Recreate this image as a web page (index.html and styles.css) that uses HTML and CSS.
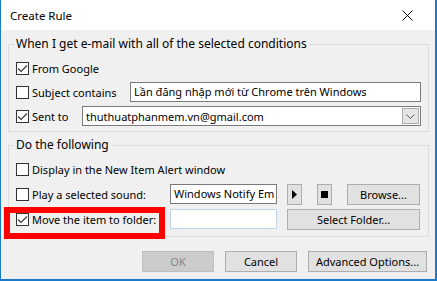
FILE: index.html
```html
<!DOCTYPE html>
<html lang="en">
<head>
    <meta charset="UTF-8">
    <meta name="viewport" content="width=device-width, initial-scale=1.0">
    <title>Create Rule</title>
    <link rel="stylesheet" href="styles.css">
</head>
<body>
    <div class="window">
        <div class="titlebar">
            <span class="title">Create Rule</span>
            <svg class="close" width="11" height="11" viewBox="0 0 11 11">
                <path d="M0.5 0.5 L10.5 10.5 M10.5 0.5 L0.5 10.5" stroke="#000" stroke-width="1" fill="none"/>
            </svg>
        </div>

        <div class="content">
            <fieldset class="group group-conditions">
                <legend>When I get e-mail with all of the selected conditions</legend>
                <div class="row">
                    <label class="check">
                        <span class="box"><svg width="11" height="11" viewBox="0 0 11 11"><path d="M1 5.5 L4 8.5 L10 2.5" stroke="#333" stroke-width="1.1" fill="none"/></svg></span>
                        From Google
                    </label>
                </div>
                <div class="row">
                    <label class="check label-subject">
                        <span class="box"></span>
                        Subject contains
                    </label>
                    <div class="field field-wide">Lần đăng nhập mới từ Chrome trên Windows</div>
                </div>
                <div class="row">
                    <label class="check label-sent">
                        <span class="box"><svg width="11" height="11" viewBox="0 0 11 11"><path d="M1 5.5 L4 8.5 L10 2.5" stroke="#333" stroke-width="1.1" fill="none"/></svg></span>
                        Sent to
                    </label>
                    <div class="combo">
                        <span class="combo-text">thuthuatphanmem.vn@gmail.com</span>
                        <span class="combo-btn">
                            <svg width="9" height="5" viewBox="0 0 9 5"><path d="M0.5 0.5 L4.5 4.5 L8.5 0.5" stroke="#555" stroke-width="1" fill="none"/></svg>
                        </span>
                    </div>
                </div>
            </fieldset>

            <fieldset class="group group-actions">
                <legend>Do the following</legend>
                <div class="row">
                    <label class="check">
                        <span class="box"></span>
                        Display in the New Item Alert window
                    </label>
                </div>
                <div class="row">
                    <label class="check label-action">
                        <span class="box"></span>
                        Play a selected sound:
                    </label>
                    <div class="field field-short">Windows Notify Em</div>
                    <button class="button button-icon"><svg width="5" height="9" viewBox="0 0 5 9"><path d="M0 0 L5 4.5 L0 9 Z" fill="#000"/></svg></button>
                    <button class="button button-icon"><svg width="7" height="7" viewBox="0 0 7 7"><rect width="7" height="7" fill="#000"/></svg></button>
                    <button class="button button-browse">Browse...</button>
                </div>
                <div class="row">
                    <label class="check label-action marked">
                        <span class="box"><svg width="11" height="11" viewBox="0 0 11 11"><path d="M1 5.5 L4 8.5 L10 2.5" stroke="#333" stroke-width="1.1" fill="none"/></svg></span>
                        Move the item to folder:
                    </label>
                    <div class="field field-short field-empty"></div>
                    <button class="button button-folder">Select Folder...</button>
                </div>
            </fieldset>

            <div class="actions">
                <button class="button button-main" disabled>OK</button>
                <button class="button button-main">Cancel</button>
                <button class="button button-advanced">Advanced Options...</button>
            </div>
        </div>
    </div>
</body>
</html>
```

FILE: styles.css
```css
body {
    margin: 0;
    padding: 0;
    font-family: "Noto Sans", Arial, sans-serif;
    font-size: 11px;
    color: #000000;
    background-color: #ffffff;
}

.window {
    width: 437px;
    height: 281px;
    box-sizing: border-box;
    border-left: 1px solid #1979ca;
    border-right: 2px solid #1979ca;
    border-bottom: 2px solid #1979ca;
    background-color: #f0f0f0;
}

.titlebar {
    height: 30px;
    background-color: #ffffff;
    display: flex;
    align-items: center;
    padding-left: 9px;
    font-size: 11.5px;
}

.title {
    flex: 1;
}

.close {
    margin-right: 22px;
}

.content {
    padding: 0 6px 0 7px;
}

.group {
    margin: 6px 0 0 0;
    padding: 4px 7px 3px 7px;
    border: 1px solid #dcdcdc;
    min-width: 0;
}

.group legend {
    padding: 0 2px;
    margin-left: -2px;
    line-height: 16px;
    font-size: 12px;
}

.group-actions {
    margin-top: 5px;
    padding-top: 5px;
    padding-bottom: 6px;
}

.row {
    display: flex;
    align-items: center;
    height: 24px;
}

.group-actions .row {
    height: 22px;
}

.group-actions .row + .row {
    margin-top: 3px;
}

.check {
    display: flex;
    align-items: center;
    gap: 3px;
    white-space: nowrap;
    position: relative;
}

.box {
    width: 13px;
    height: 13px;
    box-sizing: border-box;
    border: 1px solid #333333;
    background-color: #ffffff;
    display: flex;
    align-items: center;
    justify-content: center;
}

.label-subject {
    width: 114px;
}

.label-sent {
    width: 66px;
}

.label-action {
    width: 154px;
}

/* red highlight drawn over the folder option */
.marked::after {
    content: "";
    position: absolute;
    left: -12px;
    top: -5px;
    width: 161px;
    height: 32px;
    box-sizing: border-box;
    border: 6px solid #ff0000;
}

.field {
    height: 20px;
    box-sizing: border-box;
    border: 1px solid #7a7a7a;
    background-color: #ffffff;
    padding: 0 3px;
    line-height: 18px;
    white-space: nowrap;
    overflow: hidden;
}

.field-wide {
    width: 291px;
}

.field-short {
    width: 107px;
}

.field-empty {
    border-color: #c1d4ea;
}

.combo {
    width: 339px;
    height: 20px;
    box-sizing: border-box;
    border: 1px solid #7a7a7a;
    background-color: #ffffff;
    display: flex;
    align-items: center;
    padding: 0 1px 0 3px;
}

.combo-text {
    flex: 1;
}

.combo-btn {
    width: 17px;
    height: 16px;
    box-sizing: border-box;
    border: 1px solid #acacac;
    background-color: #e5e5e5;
    display: flex;
    align-items: center;
    justify-content: center;
}

.button {
    font-family: inherit;
    font-size: 11px;
    color: #000000;
    background-color: #e1e1e1;
    border: 1px solid #adadad;
    height: 21px;
    padding: 0;
    display: flex;
    align-items: center;
    justify-content: center;
}

.button-icon {
    width: 15px;
    margin-left: 10px;
}

.button-icon + .button-icon {
    margin-left: 15px;
}

.button-browse {
    width: 73px;
    margin-left: 15px;
}

.button-folder {
    width: 133px;
    margin-left: 10px;
}

.actions {
    display: flex;
    justify-content: flex-end;
    gap: 11px;
    margin-top: 14px;
    padding-right: 2px;
}

.button-main {
    width: 72px;
}

.button-advanced {
    width: 119px;
}

.button:disabled {
    background-color: #cccccc;
    border-color: #bfbfbf;
    color: #838383;
}
```
